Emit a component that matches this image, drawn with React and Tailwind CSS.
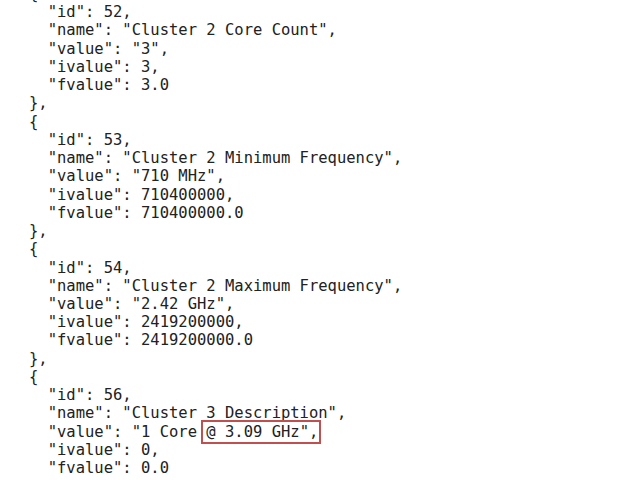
const blocks = [
  { id: 53, name: "Cluster 2 Minimum Frequency", value: "710 MHz", ivalue: "710400000", fvalue: "710400000.0" },
  { id: 54, name: "Cluster 2 Maximum Frequency", value: "2.42 GHz", ivalue: "2419200000", fvalue: "2419200000.0" },
];

function Line({ children }) {
  return <div className="whitespace-pre">{children}</div>;
}

export default function App() {
  return (
    <div className="w-[640px] h-[480px] overflow-hidden bg-white">
      <div className="-mt-[15px] pl-[29px] text-[15.5px] leading-[18.24px] text-[#222] font-['DejaVu_Sans_Mono',monospace]">
        <Line>{"{"}</Line>
        <Line>{'  "id": 52,'}</Line>
        <Line>{'  "name": "Cluster 2 Core Count",'}</Line>
        <Line>{'  "value": "3",'}</Line>
        <Line>{'  "ivalue": 3,'}</Line>
        <Line>{'  "fvalue": 3.0'}</Line>
        <Line>{"},"}</Line>
        {blocks.map((b) => (
          <div key={b.id}>
            <Line>{"{"}</Line>
            <Line>{`  "id": ${b.id},`}</Line>
            <Line>{`  "name": "${b.name}",`}</Line>
            <Line>{`  "value": "${b.value}",`}</Line>
            <Line>{`  "ivalue": ${b.ivalue},`}</Line>
            <Line>{`  "fvalue": ${b.fvalue}`}</Line>
            <Line>{"},"}</Line>
          </div>
        ))}
        <Line>{"{"}</Line>
        <Line>{'  "id": 56,'}</Line>
        <Line>{'  "name": "Cluster 3 Description",'}</Line>
        <Line>
          {'  "value": "1 Core '}
          <span className="outline-2 outline-solid outline-[#c04f4f] outline-offset-[1px] pl-[2px] -ml-[2px]">{'@ 3.09 GHz",'}</span>
        </Line>
        <Line>{'  "ivalue": 0,'}</Line>
        <Line>{'  "fvalue": 0.0'}</Line>
      </div>
    </div>
  );
}
